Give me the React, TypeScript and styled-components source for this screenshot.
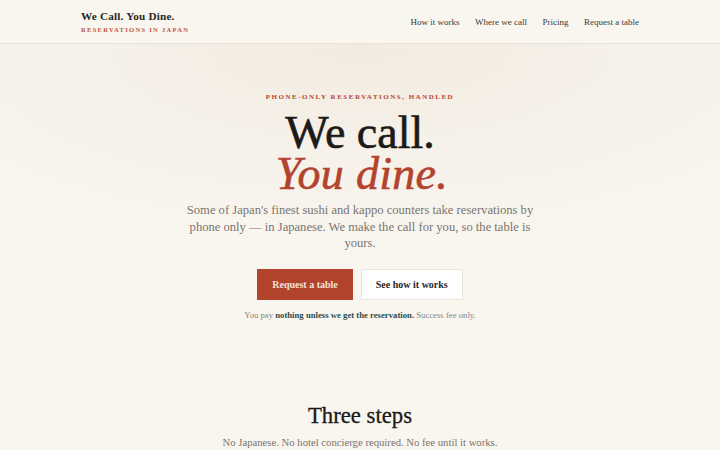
import React from "react";
import styled, { createGlobalStyle } from "styled-components";

const Global = createGlobalStyle`
  html, body { margin: 0; padding: 0; }
  body {
    background: #f9f6f0;
    font-family: "Liberation Serif", "Times New Roman", serif;
    color: #1c1a17;
    -webkit-font-smoothing: antialiased;
  }
`;

const Header = styled.header`
  display: flex;
  align-items: center;
  justify-content: space-between;
  height: 44px;
  padding: 0 81px;
  border-bottom: 1px solid #ebe4d8;
  background: #f9f6f0;
  box-sizing: border-box;
`;

const Brand = styled.div`
  display: flex;
  flex-direction: column;
  gap: 3px;
  margin-top: 1px;
`;

const BrandName = styled.div`
  font-size: 11.2px;
  line-height: 13px;
  font-weight: 700;
  color: #2a2724;
  letter-spacing: 0.2px;
`;

const BrandTag = styled.div`
  font-size: 6.5px;
  line-height: 8px;
  letter-spacing: 1.3px;
  color: #c0553a;
  font-weight: 700;
`;

const Nav = styled.nav`
  display: flex;
  gap: 15.5px;
`;

const NavLink = styled.a`
  font-size: 9px;
  color: #3d3935;
  text-decoration: none;
`;

const Hero = styled.section`
  display: flex;
  flex-direction: column;
  align-items: center;
  padding: 49px 0 40px;
  background: radial-gradient(ellipse 75% 65% at 50% 0%, #f2ebe1 0%, #f9f6f0 100%);
`;

const Eyebrow = styled.div`
  font-size: 7px;
  line-height: 8px;
  letter-spacing: 1.5px;
  color: #b8452e;
  font-weight: 700;
`;

const Title = styled.h1`
  margin: 11px 0 0;
  font-size: 46px;
  font-weight: 400;
  line-height: 41px;
  text-align: center;
  color: #1c1a17;
  -webkit-text-stroke: 0.6px currentColor;
`;

const Accent = styled.em`
  display: block;
  color: #b2432c;
  font-style: italic;
  letter-spacing: 0.3px;
  margin-left: 4px;
`;

const Lede = styled.p`
  margin: 8px 0 0;
  width: 354px;
  font-size: 12.6px;
  line-height: 16.5px;
  text-align: center;
  color: #7a746d;
`;

const Actions = styled.div`
  display: flex;
  gap: 8px;
  margin-top: 17px;
`;

const Button = styled.a<{ $primary?: boolean }>`
  display: flex;
  align-items: center;
  justify-content: center;
  height: 31px;
  padding: 0 14px;
  font-size: 10px;
  font-weight: 700;
  text-decoration: none;
  box-sizing: border-box;
  background: ${(p) => (p.$primary ? "#b2432c" : "#ffffff")};
  color: ${(p) => (p.$primary ? "#f6e1d8" : "#2a2724")};
  border: 1px solid ${(p) => (p.$primary ? "#b2432c" : "#ebe4d8")};
`;

const Note = styled.p`
  margin: 10px 0 0;
  font-size: 8.7px;
  line-height: 10px;
  color: #8a847c;
`;

const Strong = styled.strong`
  color: #2f4b44;
`;

const Steps = styled.section`
  display: flex;
  flex-direction: column;
  align-items: center;
  padding-top: 43px;
`;

const StepsTitle = styled.h2`
  margin: 0;
  font-size: 22.7px;
  line-height: 26px;
  font-weight: 400;
  color: #1c1a17;
  -webkit-text-stroke: 0.3px currentColor;
`;

const StepsSub = styled.p`
  margin: 6px 0 0;
  font-size: 10.7px;
  line-height: 14px;
  color: #7a746d;
`;

export default function App() {
  return (
    <>
      <Global />
      <Header>
        <Brand>
          <BrandName>We Call. You Dine.</BrandName>
          <BrandTag>RESERVATIONS IN JAPAN</BrandTag>
        </Brand>
        <Nav>
          <NavLink href="#how">How it works</NavLink>
          <NavLink href="#where">Where we call</NavLink>
          <NavLink href="#pricing">Pricing</NavLink>
          <NavLink href="#request">Request a table</NavLink>
        </Nav>
      </Header>
      <Hero>
        <Eyebrow>PHONE-ONLY RESERVATIONS, HANDLED</Eyebrow>
        <Title>
          We call.
          <Accent>You dine.</Accent>
        </Title>
        <Lede>
          Some of Japan's finest sushi and kappo counters take reservations by
          phone only — in Japanese. We make the call for you, so the table is
          yours.
        </Lede>
        <Actions>
          <Button $primary href="#request">Request a table</Button>
          <Button href="#how">See how it works</Button>
        </Actions>
        <Note>
          You pay <Strong>nothing unless we get the reservation.</Strong> Success fee only.
        </Note>
      </Hero>
      <Steps>
        <StepsTitle>Three steps</StepsTitle>
        <StepsSub>No Japanese. No hotel concierge required. No fee until it works.</StepsSub>
      </Steps>
    </>
  );
}
